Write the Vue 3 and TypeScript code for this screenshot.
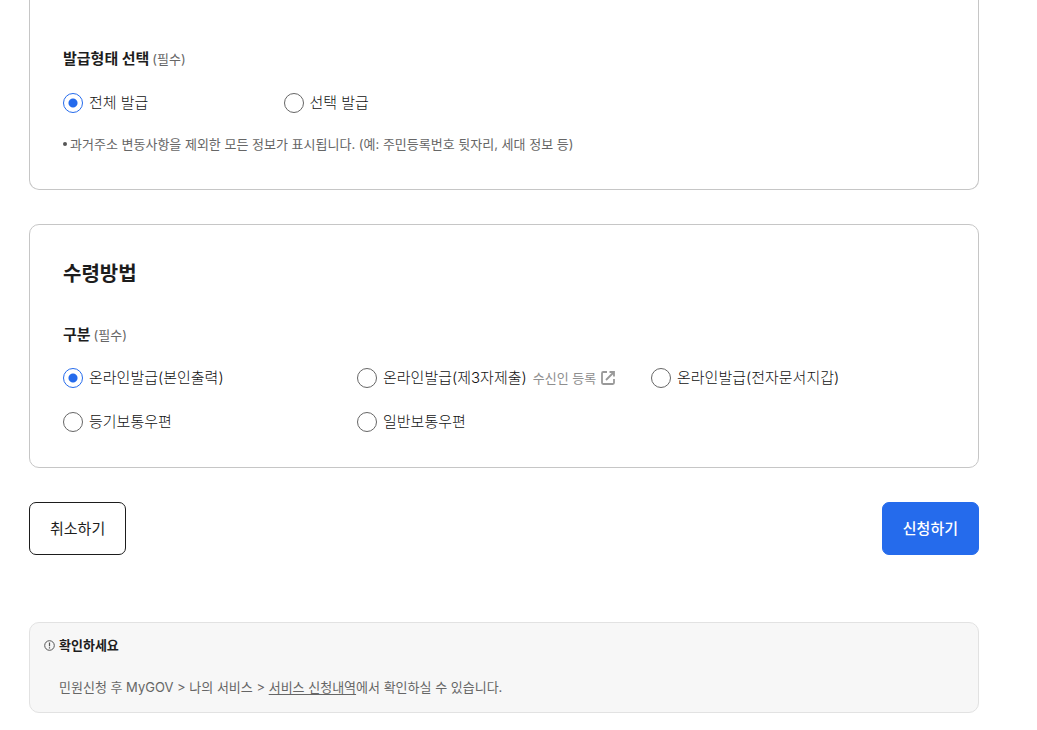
<script setup lang="ts">
import { ref } from 'vue'

interface Option {
  value: string
  label: string
  link?: string
}

const issueOptions: Option[] = [
  { value: 'all', label: '전체 발급' },
  { value: 'select', label: '선택 발급' },
]

const receiveOptions: Option[] = [
  { value: 'self', label: '온라인발급(본인출력)' },
  { value: 'third', label: '온라인발급(제3자제출)', link: '수신인 등록' },
  { value: 'wallet', label: '온라인발급(전자문서지갑)' },
  { value: 'registered', label: '등기보통우편' },
  { value: 'mail', label: '일반보통우편' },
]

const issueType = ref('all')
const receiveType = ref('self')
</script>

<template>
  <main class="page">
    <section class="card card-top">
      <fieldset class="group">
        <legend class="legend">발급형태 선택<span class="required">(필수)</span></legend>
        <div class="options four">
          <div v-for="o in issueOptions" :key="o.value" class="option">
            <input :id="'issue-' + o.value" v-model="issueType" type="radio" name="issue" :value="o.value" class="radio" />
            <label :for="'issue-' + o.value">{{ o.label }}</label>
          </div>
        </div>
      </fieldset>
      <ul class="notes">
        <li>과거주소 변동사항을 제외한 모든 정보가 표시됩니다. (예: 주민등록번호 뒷자리, 세대 정보 등)</li>
      </ul>
    </section>

    <section class="card card-receive">
      <h2 class="title">수령방법</h2>
      <fieldset class="group">
        <legend class="legend">구분<span class="required">(필수)</span></legend>
        <div class="options three">
          <div v-for="o in receiveOptions" :key="o.value" class="option">
            <input :id="'receive-' + o.value" v-model="receiveType" type="radio" name="receive" :value="o.value" class="radio" />
            <label :for="'receive-' + o.value">{{ o.label }}</label>
            <a v-if="o.link" href="#" class="register">
              {{ o.link }}
              <svg width="16" height="16" viewBox="0 0 16 16" fill="none" stroke="currentColor" stroke-width="1.8" aria-hidden="true">
                <path d="M7 2H3.2Q2 2 2 3.2V12.8Q2 14 3.2 14H12.8Q14 14 14 12.8V9" />
                <path d="M9.5 2H14V6.5M14 2L6 10" />
              </svg>
            </a>
          </div>
        </div>
      </fieldset>
    </section>

    <div class="actions">
      <button type="button" class="btn">취소하기</button>
      <button type="button" class="btn primary">신청하기</button>
    </div>

    <aside class="notice">
      <h3 class="notice-title">
        <svg width="11" height="11" viewBox="0 0 11 11" fill="none" stroke="currentColor" aria-hidden="true">
          <circle cx="5.5" cy="5.5" r="4.8" />
          <path d="M5.5 2.6V6.2M5.5 7.2V8.4" stroke-width="1.2" />
        </svg>
        확인하세요
      </h3>
      <p class="notice-text">민원신청 후 MyGOV &gt; 나의 서비스 &gt; <a href="#">서비스 신청내역</a>에서 확인하실 수 있습니다.</p>
    </aside>
  </main>
</template>

<style>
body {
  margin: 0;
  background: #fff;
}
</style>

<style scoped>
.page {
  padding: 0 58px 16px 29px;
  font-family: Inter, "Noto Sans CJK KR", sans-serif;
  font-size: 15px;
  font-weight: 300;
  line-height: 24px;
  color: #111;
}
.card {
  box-sizing: border-box;
  border: 1px solid #c6c6c6;
  border-radius: 10px;
  padding: 33px;
}
.card-top {
  border-top: 0;
  border-radius: 0 0 10px 10px;
  padding-top: 47px;
}
.card-receive {
  margin-top: 34px;
  padding-top: 34px;
}
.title {
  margin: 0 0 34px;
  font-size: 20px;
  line-height: 30px;
  font-weight: 700;
  color: #1d1d1d;
}
.group {
  margin: 0;
  padding: 0;
  border: 0;
  min-width: 0;
}
.legend {
  padding: 0;
  font-weight: 700;
  color: #1d1d1d;
}
.required {
  margin-left: 3px;
  font-size: 13px;
  font-weight: 400;
  color: #666;
}
.options {
  display: grid;
  row-gap: 20px;
  padding-top: 20px;
}
.card-receive .options {
  padding-top: 19px;
}
.four {
  grid-template-columns: repeat(4, 1fr);
}
.three {
  grid-template-columns: repeat(3, 1fr);
}
.option {
  display: flex;
  align-items: center;
  white-space: nowrap;
}
.radio {
  appearance: none;
  box-sizing: border-box;
  width: 20px;
  height: 20px;
  margin: 0 6px 0 0;
  border: 1px solid #666;
  border-radius: 50%;
  background: #fff;
}
.radio:checked {
  border-color: #256bec;
  background: radial-gradient(circle, #256bec 4px, #fff 5px);
}
.register {
  display: flex;
  align-items: center;
  gap: 4px;
  margin-left: 6px;
  font-size: 13px;
  font-weight: 400;
  color: #8e8e8e;
  text-decoration: none;
}
.register svg {
  color: #999;
}
.notes {
  list-style: none;
  margin: 17px 0 0;
  padding: 0;
  font-size: 13px;
  font-weight: 400;
  color: #666;
}
.notes li {
  display: flex;
  align-items: center;
  gap: 3px;
}
.notes li::before {
  content: "";
  width: 4px;
  height: 4px;
  border-radius: 50%;
  background: #555;
}
.actions {
  display: flex;
  justify-content: space-between;
  margin-top: 34px;
}
.btn {
  box-sizing: border-box;
  height: 53px;
  padding: 0 20px;
  border: 1px solid #1d1d1d;
  border-radius: 7px;
  background: #fff;
  color: #1d1d1d;
  font: inherit;
  font-weight: 400;
}
.primary {
  border-color: #256bec;
  background: #256bec;
  color: #fff;
  font-weight: 500;
}
.notice {
  margin-top: 67px;
  padding: 10px 14px 13px;
  border: 1px solid #e2e2e2;
  border-radius: 10px;
  background: #f7f7f7;
}
.notice-title {
  display: flex;
  align-items: center;
  gap: 4px;
  margin: 0;
  font-size: 13px;
  font-weight: 700;
  color: #1d1d1d;
}
.notice-title svg {
  color: #555;
}
.notice-text {
  margin: 18px 0 0 15px;
  font-size: 13px;
  font-weight: 400;
  color: #666;
}
.notice-text a {
  color: inherit;
  text-underline-offset: 2px;
}
</style>
